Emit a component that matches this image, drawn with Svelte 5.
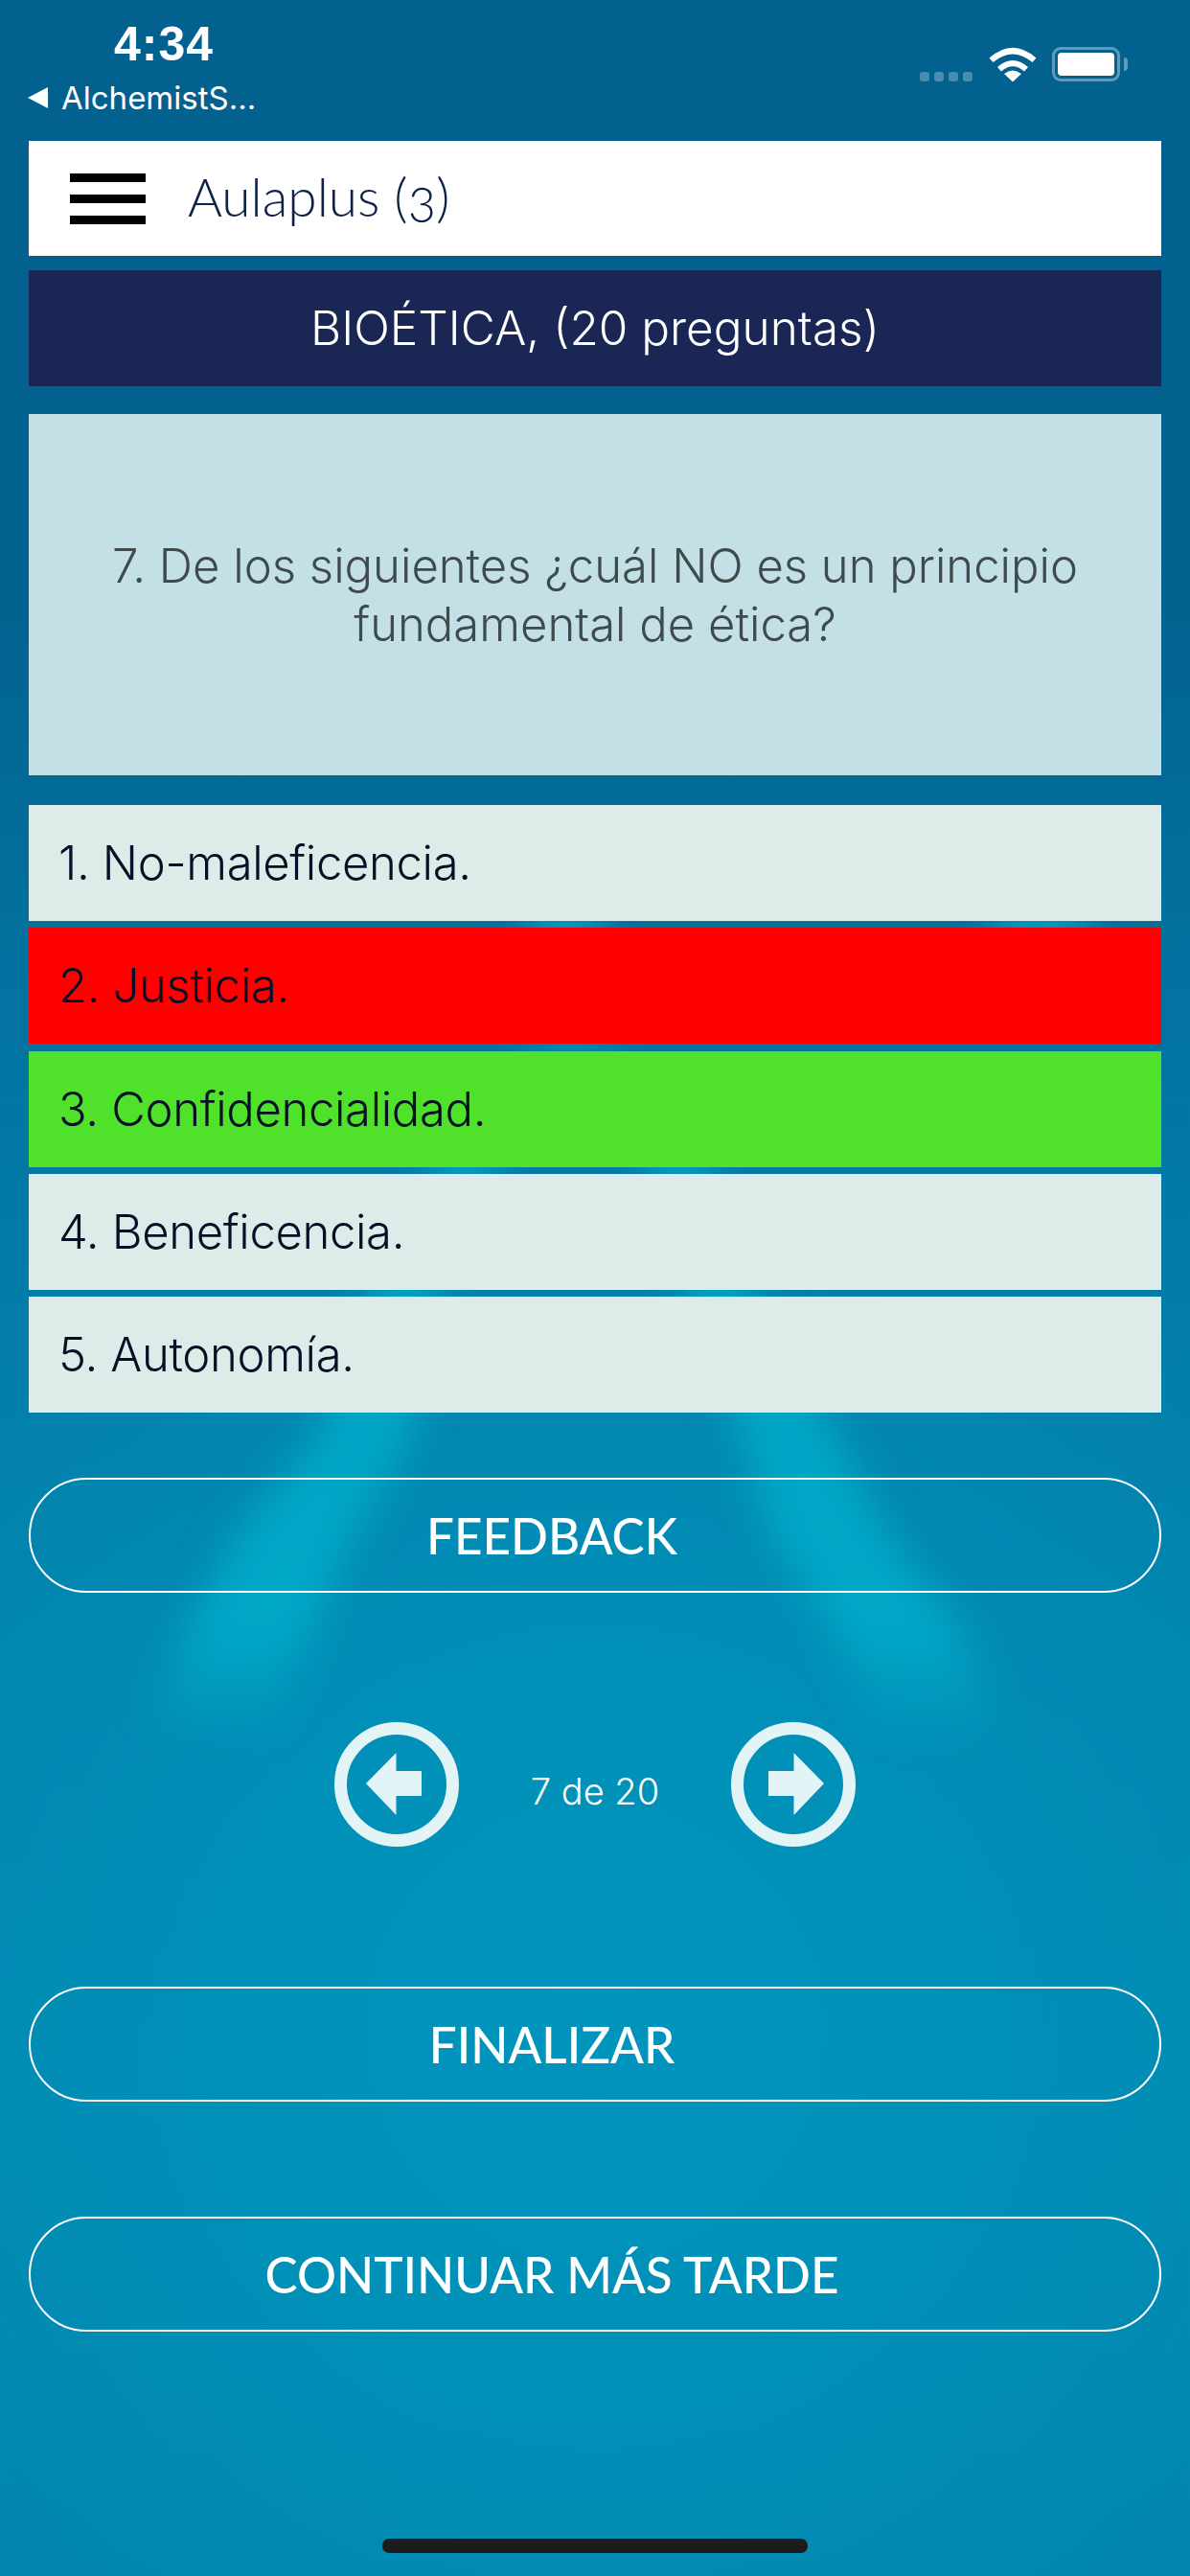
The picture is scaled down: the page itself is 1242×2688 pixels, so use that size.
<script>
  let options = [
    { text: '1. No-maleficencia.', state: '' },
    { text: '2. Justicia.', state: 'wrong' },
    { text: '3. Confidencialidad.', state: 'right' },
    { text: '4. Beneficencia.', state: '' },
    { text: '5. Autonomía.', state: '' }
  ];
</script>

<div class="page">
  <svg class="beams" width="1242" height="2688" viewBox="0 0 1242 2688" aria-hidden="true">
    <defs>
      <linearGradient id="beamFill" gradientUnits="userSpaceOnUse" x1="0" y1="1080" x2="0" y2="1830">
        <stop offset="0" stop-color="#00aac8" stop-opacity="0.75"/>
        <stop offset="0.82" stop-color="#00aac8" stop-opacity="0.95"/>
        <stop offset="1" stop-color="#00aac8" stop-opacity="0"/>
      </linearGradient>
      <filter id="soft" x="-50%" y="-20%" width="200%" height="140%">
        <feGaussianBlur stdDeviation="20"/>
      </filter>
    </defs>
    <g filter="url(#soft)" fill="url(#beamFill)">
      <polygon points="575,1090 605,1090 513,1221 455,1350 430,1500 369,1600 326,1700 280,1800 160,1800 196,1700 249,1600 330,1500 385,1350 453,1221"/>
      <polygon points="585,1090 615,1090 743,1221 785,1350 874,1500 924,1600 1000,1700 1040,1800 920,1800 870,1700 804,1600 774,1500 715,1350 683,1221"/>
    </g>
    <ellipse cx="590" cy="965" rx="45" ry="26" fill="#00a5c4" filter="url(#soft)" opacity="0.9"/>
    <ellipse cx="1085" cy="965" rx="55" ry="26" fill="#00a5c4" filter="url(#soft)" opacity="0.9"/>
  </svg>

  <div class="status">
    <div class="status-left">
      <div class="time">4:34</div>
      <div class="back"><span class="tri"></span>AlchemistS...</div>
    </div>
    <div class="status-right">
      <div class="dots"><i></i><i></i><i></i><i></i></div>
      <svg class="wifi" width="50" height="37" viewBox="0 0 50 37">
        <path d="M25 36.500 L16 28 Q25 21 34 28Z" fill="#fff"/>
        <path d="M9 21 Q25 7 41 21 L37 25.500 Q25 15 13 25.500Z" fill="#fff"/>
        <path d="M0.500 11.500 Q25 -10 49.500 11.500 L45.500 16 Q25 -1 4.500 16Z" fill="#fff"/>
      </svg>
      <div class="battery"><div class="level"></div><span class="nub"></span></div>
    </div>
  </div>

  <div class="content">
    <div class="topbar">
      <div class="burger"><i></i><i></i><i></i></div>
      <span class="app-name">Aulaplus (3)</span>
    </div>
    <div class="title">BIOÉTICA, (20 preguntas)</div>
    <div class="question">7. De los siguientes ¿cuál NO es un principio fundamental de ética?</div>

    <div class="options">
      {#each options as o}
        <div class="option {o.state}">{o.text}</div>
      {/each}
    </div>

    <button class="pill feedback">FEEDBACK</button>

    <div class="pager">
      <svg width="130" height="130" viewBox="0 0 130 130">
        <circle cx="65" cy="65" r="58.500" fill="none" stroke="#e2f4f5" stroke-width="13"/>
        <path d="M33 64 L64.500 32 V51 H91 V77 H64.500 V97Z" fill="#e2f4f5"/>
      </svg>
      <span class="count">7 de 20</span>
      <svg width="130" height="130" viewBox="0 0 130 130">
        <circle cx="65" cy="65" r="58.500" fill="none" stroke="#e2f4f5" stroke-width="13"/>
        <path d="M97 64 L65.500 32 V51 H39 V77 H65.500 V97Z" fill="#e2f4f5"/>
      </svg>
    </div>

    <button class="pill finish">FINALIZAR</button>
    <button class="pill later">CONTINUAR MÁS TARDE</button>
  </div>

  <div class="home"></div>
</div>

<style>
  :global(body) {
    margin: 0;
    background: #02618f;
  }

  .page {
    position: relative;
    width: 1242px;
    height: 2688px;
    overflow: hidden;
    font-family: Inter, "Liberation Sans", sans-serif;
    background:
      radial-gradient(ellipse 900px 900px at 621px 2120px, #0095bd 0%, #0090b8 40%, rgba(0, 135, 175, 0) 100%),
      linear-gradient(180deg, #02618f 0%, #02618f 22%, #0372a0 38%, #0280ab 55%, #0289b1 80%, #0284ac 100%);
  }

  .beams {
    position: absolute;
    left: 0;
    top: 0;
  }

  .status {
    position: relative;
    height: 147px;
    box-sizing: border-box;
    display: flex;
    justify-content: space-between;
    color: #fff;
  }

  .status-left {
    padding: 21px 0 0 29px;
  }

  .time {
    margin-left: 90px;
    font-family: "Liberation Sans", sans-serif;
    font-weight: 700;
    font-size: 50px;
    letter-spacing: 1px;
    line-height: 50px;
  }

  .back {
    display: flex;
    align-items: center;
    margin-top: 13px;
    font-size: 33px;
    line-height: 36px;
  }

  .tri {
    width: 0;
    height: 0;
    margin-right: 14px;
    border-style: solid;
    border-width: 11px 21px 11px 0;
    border-color: transparent #fff transparent transparent;
  }

  .status-right {
    display: flex;
    align-items: flex-start;
    padding: 49px 73px 0 0;
  }

  .dots {
    display: flex;
    gap: 5px;
    margin: 26px 17px 0 0;
  }

  .dots i {
    display: block;
    width: 10px;
    height: 10px;
    border-radius: 3px;
    background: rgba(255, 255, 255, 0.28);
  }

  .wifi {
    margin-right: 16px;
  }

  .battery {
    position: relative;
    box-sizing: border-box;
    width: 71px;
    height: 36px;
    padding: 3px;
    border: 3px solid #5f9cb9;
    border-radius: 9px;
  }

  .level {
    height: 100%;
    border-radius: 4px;
    background: #fff;
  }

  .nub {
    position: absolute;
    right: -11px;
    top: 8px;
    width: 4px;
    height: 14px;
    border-radius: 0 7px 7px 0;
    background: #5f9cb9;
  }

  .content {
    position: relative;
    display: flex;
    flex-direction: column;
    padding: 0 30px;
  }

  .topbar {
    display: flex;
    align-items: center;
    height: 120px;
    padding-left: 43px;
    background: #fff;
    color: #0d2149;
    font-family: Lato, sans-serif;
    font-weight: 300;
    font-size: 55px;
    font-feature-settings: "onum";
  }

  .app-name {
    padding-bottom: 4px;
  }

  .burger {
    display: flex;
    flex-direction: column;
    gap: 13px;
    width: 79px;
    margin-right: 44px;
  }

  .burger i {
    display: block;
    height: 9px;
    background: #000;
  }

  .title {
    margin-top: 15px;
    height: 121px;
    line-height: 121px;
    text-align: center;
    background: #1a2754;
    color: #fff;
    font-size: 49.500px;
    font-weight: 300;
  }

  .question {
    box-sizing: border-box;
    display: flex;
    align-items: center;
    margin-top: 29px;
    height: 377px;
    padding: 0 80px;
    text-align: center;
    background: #c2e0e6;
    color: #3f4a4d;
    font-size: 49px;
    line-height: 61px;
    font-weight: 300;
  }

  .options {
    display: flex;
    flex-direction: column;
    gap: 7.300px;
    margin-top: 31px;
  }

  .option {
    height: 121px;
    line-height: 122px;
    padding-left: 31px;
    background: #dfebe8;
    color: #050f26;
    font-size: 49px;
    font-weight: 300;
    letter-spacing: -0.350px;
  }

  .wrong { background: #ff0000; }
  .right { background: #50e12a; }

  .pill {
    box-sizing: border-box;
    display: block;
    width: 100%;
    height: 120px;
    padding: 0 90px 0 0;
    border: 2px solid #fff;
    border-radius: 60px;
    background: transparent;
    color: #fff;
    font-family: Lato, sans-serif;
    font-size: 51.200px;
    font-weight: 500;
  }

  .feedback { margin-top: 68px; }
  .later { margin-top: 120px; }

  .pager {
    box-sizing: border-box;
    display: flex;
    align-items: center;
    justify-content: center;
    height: 411px;
    padding-bottom: 12px;
  }

  .count {
    width: 284px;
    padding-top: 14px;
    text-align: center;
    color: #fff;
    font-size: 38px;
    font-weight: 300;
  }

  .home {
    position: absolute;
    left: 399px;
    top: 2649px;
    width: 444px;
    height: 15px;
    border-radius: 7px;
    background: #1c1c1e;
  }
</style>
